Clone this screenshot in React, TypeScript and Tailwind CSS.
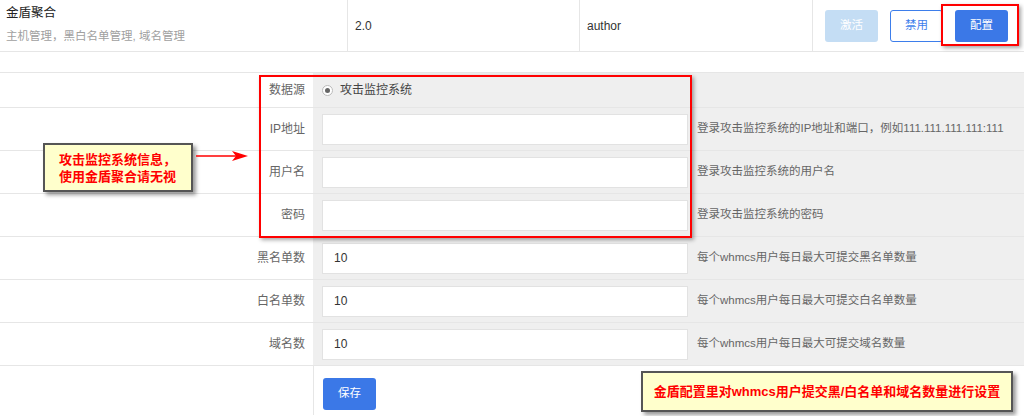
const rows = [
  { label: "IP地址", value: "", help: "登录攻击监控系统的IP地址和端口，例如111.111.111.111:111" },
  { label: "用户名", value: "", help: "登录攻击监控系统的用户名" },
  { label: "密码", value: "", help: "登录攻击监控系统的密码" },
  { label: "黑名单数", value: "10", help: "每个whmcs用户每日最大可提交黑名单数量" },
  { label: "白名单数", value: "10", help: "每个whmcs用户每日最大可提交白名单数量" },
  { label: "域名数", value: "10", help: "每个whmcs用户每日最大可提交域名数量" },
];

const App = () => {
  return (
    <div className="relative w-[1024px] h-[416px] overflow-hidden bg-white text-[12px] text-[#333] font-['Liberation_Sans','Noto_Sans_CJK_SC',sans-serif]">
      {/* Module row */}
      <div className="flex h-[52px] border-b border-[#e6e6e6]">
        <div className="w-[347px] flex flex-col justify-center px-[6px] gap-[5px] pb-[2px]">
          <span className="text-[12.5px] text-[#222]">金盾聚合</span>
          <span className="text-[11.5px] text-[#a0a0a0]">主机管理，黑白名单管理, 域名管理</span>
        </div>
        <div className="w-[232px] flex items-center px-[7px] border-l border-[#e6e6e6]">2.0</div>
        <div className="w-[233px] flex items-center px-[7px] border-l border-[#e6e6e6]">author</div>
        <div className="flex-1 flex items-center pl-[12px] gap-[12px] border-l border-[#e6e6e6]">
          <button className="w-[53px] h-[32px] rounded-[3px] bg-[#c4ddf4] text-white text-[11.5px]">激活</button>
          <button className="w-[53px] h-[32px] rounded-[3px] border border-[#3d7eeb] text-[#3d7eeb] bg-white text-[11.5px]">禁用</button>
          <button className="w-[53px] h-[32px] rounded-[3px] bg-[#3b78e7] text-white text-[11.5px]">配置</button>
        </div>
      </div>

      {/* Config form */}
      <div className="mt-[20px] border-t border-[#e6e6e6]">
        <div className="grid grid-cols-[313px_1fr] h-[35px] border-b border-[#e6e6e6]">
          <div className="flex items-center justify-end pr-[8px] text-[#666]">数据源</div>
          <div className="flex items-center bg-[#efefef] pl-[9px] gap-[7px] text-[#444]">
            <span className="w-[11px] h-[11px] rounded-full border border-[#bbb] bg-white flex items-center justify-center">
              <span className="w-[5px] h-[5px] rounded-full bg-[#666]" />
            </span>
            攻击监控系统
          </div>
        </div>
        {rows.map((r) => (
          <div key={r.label} className="grid grid-cols-[313px_1fr] h-[43px] border-b border-[#e6e6e6]">
            <div className="flex items-center justify-end pr-[8px] text-[#666]">{r.label}</div>
            <div className="flex items-center bg-[#efefef] pl-[9px]">
              <div className="w-[366px] h-[31px] bg-white border border-[#e2e2e2] flex items-center px-[11px] text-[#333]">
                {r.value}
              </div>
              <span className="ml-[9px] text-[#666] text-[11.5px]">{r.help}</span>
            </div>
          </div>
        ))}
        <div className="grid grid-cols-[313px_1fr] h-[49px]">
          <div />
          <div className="border-l border-[#e6e6e6] pl-[9px] pt-[12px]">
            <button className="w-[53px] h-[32px] rounded-[3px] bg-[#3b78e7] text-white text-[11.5px]">保存</button>
          </div>
        </div>
      </div>

      {/* Annotations */}
      <div className="absolute left-[941px] top-[4px] w-[78px] h-[42px] border-2 border-[#ff0000] shadow-[2px_2px_4px_rgba(0,0,0,0.35)]" />
      <div className="absolute left-[259px] top-[75px] w-[433px] h-[163px] border-2 border-[#ff0000] shadow-[2px_2px_4px_rgba(0,0,0,0.35)]" />

      <div className="absolute left-[43px] top-[143px] w-[150px] h-[49px] bg-[#ffffcc] border-2 border-[#555] shadow-[3px_3px_4px_rgba(0,0,0,0.4)] flex flex-col justify-center pl-[14px] text-[#ff0000] font-bold text-[13px] leading-[17px]">
        <span>攻击监控系统信息，</span>
        <span>使用金盾聚合请无视</span>
      </div>
      <svg className="absolute left-[196px] top-[150px]" width="54" height="12" viewBox="0 0 54 12">
        <line x1="0" y1="6" x2="40" y2="6" stroke="#ff0000" strokeWidth="1.5" />
        <path d="M36 1 L52 6 L36 11 L40 6 Z" fill="#ff0000" />
      </svg>

      <div className="absolute left-[641px] top-[371px] w-[372px] h-[41px] bg-[#ffffcc] border-2 border-[#555] shadow-[3px_3px_4px_rgba(0,0,0,0.4)] flex items-center justify-center text-[#ff0000] font-bold text-[13px]">
        金盾配置里对whmcs用户提交黑/白名单和域名数量进行设置
      </div>
    </div>
  );
};

export default App;
